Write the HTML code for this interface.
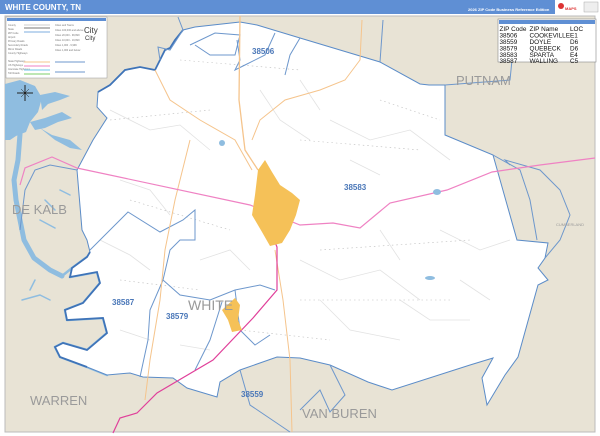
<!DOCTYPE html>
<html><head><meta charset="utf-8"><style>
html,body{margin:0;padding:0;width:600px;height:436px;overflow:hidden;background:#fff;font-family:"Liberation Sans",sans-serif}
</style></head><body>
<svg width="600" height="436" viewBox="0 0 600 436" xmlns="http://www.w3.org/2000/svg" font-family="Liberation Sans, sans-serif">
<rect x="0" y="0" width="600" height="436" fill="#fff"/>
<rect x="5" y="16" width="590" height="416" fill="#e8e3d5" stroke="#bbb" stroke-width="1"/>
<path d="M5,84 L20,80 L35,86 L42,98 L38,112 L30,122 L26,132 L16,136 L10,140 L5,140 Z" fill="#8fbde0"/>
<path d="M40,95 L55,92 L70,96 L60,100 L48,104 L42,110 Z M30,122 L45,118 L62,112 L72,118 L58,122 L45,128 L35,130 Z M40,128 L52,135 L70,140 L82,150 L70,148 L55,140 Z" fill="#8fbde0"/>
<g fill="none" stroke="#8fbde0" stroke-linecap="round" stroke-linejoin="round">
<path d="M20,134 L18,160 L14,180 L16,200 L20,220 L24,240 L34,258 L50,270 L62,276" stroke-width="5"/>
<path d="M62,276 L72,268 L87,257 M70,277 L97,272 L100,283 L83,303 L65,310 L67,320 L103,318 L107,333 L87,350 L63,343 L55,347 L60,357 L87,367 L107,375" stroke-width="2.5"/>
<path d="M22,300 L40,295 L50,300 M35,280 L30,290 M60,190 L70,195 M45,200 L55,210 M40,220 L55,228" stroke-width="1.5"/>
</g>
<path d="M98,92 L110,85 L125,70 L140,67 L155,70 L160,60 L165,50 L170,48 L175,40 L183,30 L195,27 L240,22 L257,25 L300,38 L380,62 L420,84 L429,85 L445,85 L445,93 L445,135 L493,155 L517,240 L548,243 L545,258 L538,268 L548,280 L538,285 L518,357 L505,375 L493,395 L487,405 L482,378 L493,358 L470,365 L392,390 L368,382 L330,365 L300,358 L277,357 L240,370 L220,382 L217,397 L187,388 L173,378 L143,377 L130,373 L107,375 L87,367 L60,357 L55,347 L63,343 L87,350 L107,333 L103,318 L67,320 L65,310 L83,303 L100,283 L97,272 L70,277 L72,268 L87,257 L90,252 L87,240 L82,230 L77,170 L93,140 L107,118 L97,107 L98,92 Z" fill="#fff" stroke="#5b8cc8" stroke-width="1"/>
<path d="M98,92 L110,85 L125,70 L140,67 L155,70 L160,60 L165,50 L170,48 L175,40 L183,30 M87,367 L60,357 L55,347 L63,343 L87,350 L107,333 L103,318 L67,320 L65,310 L83,303 L100,283 L97,272 L70,277 L72,268 L87,257 L90,252" fill="none" stroke="#3f74b8" stroke-width="1.8"/>
<g fill="none" stroke="#e2e2e2" stroke-width="0.8">
<path d="M110,110 L150,130 L180,125 L210,150 M120,180 L150,190 L170,215 M100,240 L130,255 L150,270 M200,260 L230,250 L250,270 M300,260 L340,280 L380,270 L420,300 M320,300 L350,330 L400,340 M440,230 L480,250 L510,240 M330,120 L370,140 L410,130 L450,160 M380,230 L400,260 M120,330 L150,340 M180,345 L210,350 M300,80 L320,110 M260,90 L280,120 L310,140 M350,160 L380,175 M460,280 L490,300 M400,300 L430,320 L470,320"/>
</g>
<g fill="none" stroke="#bbb" stroke-width="0.6" stroke-dasharray="1.5 3">
<path d="M110,120 L210,110 M130,200 L230,230 M300,140 L420,150 M320,250 L470,240 M120,280 L200,290 M300,300 L450,300 M180,60 L300,70 M380,100 L440,120 M240,330 L330,340"/>
</g>
<g fill="none" stroke="#6d97cc" stroke-width="1">
<path d="M178,17 L183,30 L170,50 L158,47 L160,60"/>
<path d="M190,45 L215,33 L240,35 L235,55 L210,55 L195,45"/>
<path d="M237,40 L240,60 L235,70 L245,65 L265,55 L275,33"/>
<path d="M300,38 L290,55 L285,75"/>
<path d="M77,170 L50,165 L35,170 L25,190 L20,230"/>
<path d="M90,250 L110,230 L128,212 L160,232 L183,220 L195,210 L195,240 L180,240 L170,250 L163,280"/>
<path d="M163,280 L150,310 L148,340 L140,377"/>
<path d="M163,280 L180,295 L210,300 L235,290 L260,285 L275,290"/>
<path d="M235,290 L240,330 L255,345 L270,335"/>
<path d="M222,302 L210,340 L195,370"/>
<path d="M380,62 L383,20"/>
<path d="M445,85 L510,80 L512,60"/>
<path d="M493,155 L520,170 L530,200 L537,240"/>
<path d="M510,165 L505,160 L540,170 L560,190 L570,215 L560,240 L545,258"/>
<path d="M240,370 L250,405 L290,432"/>
<path d="M330,365 L345,395 L330,412 L320,390 L300,410"/>
</g>
<g fill="none">
<path d="M240,16 L239,100 L245,150 L258,170" stroke="#f5c48c" stroke-width="1.3"/>
<path d="M155,70 L170,100 L200,120 L235,140 L252,170" stroke="#f5c48c" stroke-width="1"/>
<path d="M252,140 L260,120 L285,100 L320,90 L345,80 L360,60 L362,20" stroke="#f5c48c" stroke-width="1"/>
<path d="M190,140 L175,200 L165,250 L160,300 L150,360 L145,400" stroke="#f5c48c" stroke-width="1"/>
<path d="M275,250 L283,300 L290,360 L292,432" stroke="#f5c48c" stroke-width="1"/>
<path d="M20,185 L25,168 L52,157 L77,168 L250,205 L300,225 L333,223 L360,228 L390,203 L447,190 L492,172 L540,165 L595,158" stroke="#ef82c3" stroke-width="1.2"/>
<path d="M263,213 L277,247 L277,290 L253,318 L213,360 L157,393 L137,413 L120,418 L113,433" stroke="#e0409a" stroke-width="1.2"/>
</g>
<path d="M258,170 L265,160 L272,172 L280,185 L292,193 L300,200 L296,215 L290,230 L282,243 L270,246 L262,232 L252,215 L255,195 Z" fill="#f5c158"/>
<path d="M222,310 L235,298 L240,305 L238,320 L242,330 L232,332 L228,320 Z" fill="#f5c158"/>
<ellipse cx="437" cy="192" rx="4" ry="3" fill="#8fbde0"/>
<ellipse cx="430" cy="278" rx="5" ry="2" fill="#8fbde0"/>
<ellipse cx="222" cy="143" rx="3" ry="3" fill="#8fbde0"/>
<g font-weight="bold" fill="#4a77b8" font-size="8">
<text x="252" y="54">38506</text>
<text x="344" y="190">38583</text>
<text x="112" y="305">38587</text>
<text x="166" y="319">38579</text>
<text x="241" y="397">38559</text>
</g>
<g fill="#9a9a9a" font-size="13">
<text x="456" y="85">PUTNAM</text>
<text x="12" y="214">DE KALB</text>
<text x="188" y="310" font-size="14">WHITE</text>
<text x="30" y="405">WARREN</text>
<text x="302" y="418">VAN BUREN</text>
<text x="556" y="226" font-size="4">CUMBERLAND</text>
</g>
<g stroke="#222" stroke-width="1"><path d="M25,85 L25,101 M17,93 L33,93"/><path d="M21,89 L29,97 M29,89 L21,97" stroke-width="0.5"/></g>
<rect x="0" y="0" width="600" height="14" fill="#5f8fd4"/>
<text x="5" y="10" font-size="8" font-weight="bold" fill="#fff">WHITE COUNTY, TN</text>
<text x="468" y="11" font-size="4" font-weight="bold" fill="#fff">2026 ZIP Code Business Reference Edition</text>
<rect x="555" y="0" width="45" height="14" fill="#fff"/>
<circle cx="561" cy="6" r="3" fill="#d33"/><text x="565" y="10" font-size="4" fill="#d33" font-weight="bold">MAPS</text>
<rect x="584" y="2" width="14" height="10" fill="#eee" stroke="#999" stroke-width="0.4"/>
<rect x="6" y="17" width="101" height="61" fill="#fff" stroke="#999" stroke-width="0.5"/>
<rect x="7" y="18" width="99" height="3" fill="#5f8fd4"/>
<g font-size="2.5" fill="#777">
<text x="8" y="26">County</text><text x="8" y="30">State</text><text x="8" y="34">ZIP Code</text><text x="8" y="38">Airport</text><text x="8" y="42">Primary Roads</text><text x="8" y="46">Secondary Roads</text><text x="8" y="50">Minor Roads</text><text x="8" y="54">County Highways</text><text x="8" y="62">State Highways</text><text x="8" y="66">US Highways</text><text x="8" y="70">Interstate Highways</text><text x="8" y="74">Toll Roads</text>
<text x="55" y="26">Cities and Towns</text><text x="55" y="31">Cities 100,000 and above</text><text x="55" y="36">Cities 20,000 - 99,999</text><text x="55" y="41">Cities 10,000 - 19,999</text><text x="55" y="46">Cities 1,000 - 9,999</text><text x="55" y="51">Cities 1,000 and below</text>
</g>
<g stroke-width="1" fill="none">
<line x1="24" y1="25" x2="50" y2="25" stroke="#ccc"/>
<line x1="24" y1="28" x2="50" y2="28" stroke="#777"/>
<line x1="24" y1="32" x2="50" y2="32" stroke="#a8c8ea" stroke-width="1.5"/>
<line x1="24" y1="62" x2="50" y2="62" stroke="#f5c48c"/>
<line x1="24" y1="66" x2="50" y2="66" stroke="#ef82c3"/>
<line x1="24" y1="70" x2="50" y2="70" stroke="#6cc6ea"/>
<line x1="24" y1="74" x2="50" y2="74" stroke="#7ccf6a"/>
<line x1="55" y1="62" x2="85" y2="62" stroke="#6d97cc"/>
<line x1="55" y1="72" x2="85" y2="72" stroke="#6d97cc"/>
</g>
<text x="84" y="33" font-size="8" fill="#333">City</text>
<text x="85" y="40" font-size="6" fill="#333">City</text>
<rect x="498" y="19" width="98" height="43" fill="#fff" stroke="#888" stroke-width="0.6"/>
<rect x="499" y="20" width="96" height="4" fill="#5f8fd4"/>
<g font-size="6.4" fill="#111">
<text x="499.5" y="31">ZIP Code</text><text x="529.5" y="31">ZIP Name</text><text x="570" y="31">LOC</text>
<text x="499.5" y="37.5">38506</text><text x="529.5" y="37.5">COOKEVILLE</text><text x="570" y="37.5">E1</text>
<text x="499.5" y="44">38559</text><text x="529.5" y="44">DOYLE</text><text x="570" y="44">D6</text>
<text x="499.5" y="50.5">38579</text><text x="529.5" y="50.5">QUEBECK</text><text x="570" y="50.5">D6</text>
<text x="499.5" y="57">38583</text><text x="529.5" y="57">SPARTA</text><text x="570" y="57">E4</text>
<text x="499.5" y="63">38587</text><text x="529.5" y="63">WALLING</text><text x="570" y="63">C5</text>
</g>
</svg>
</body></html>
